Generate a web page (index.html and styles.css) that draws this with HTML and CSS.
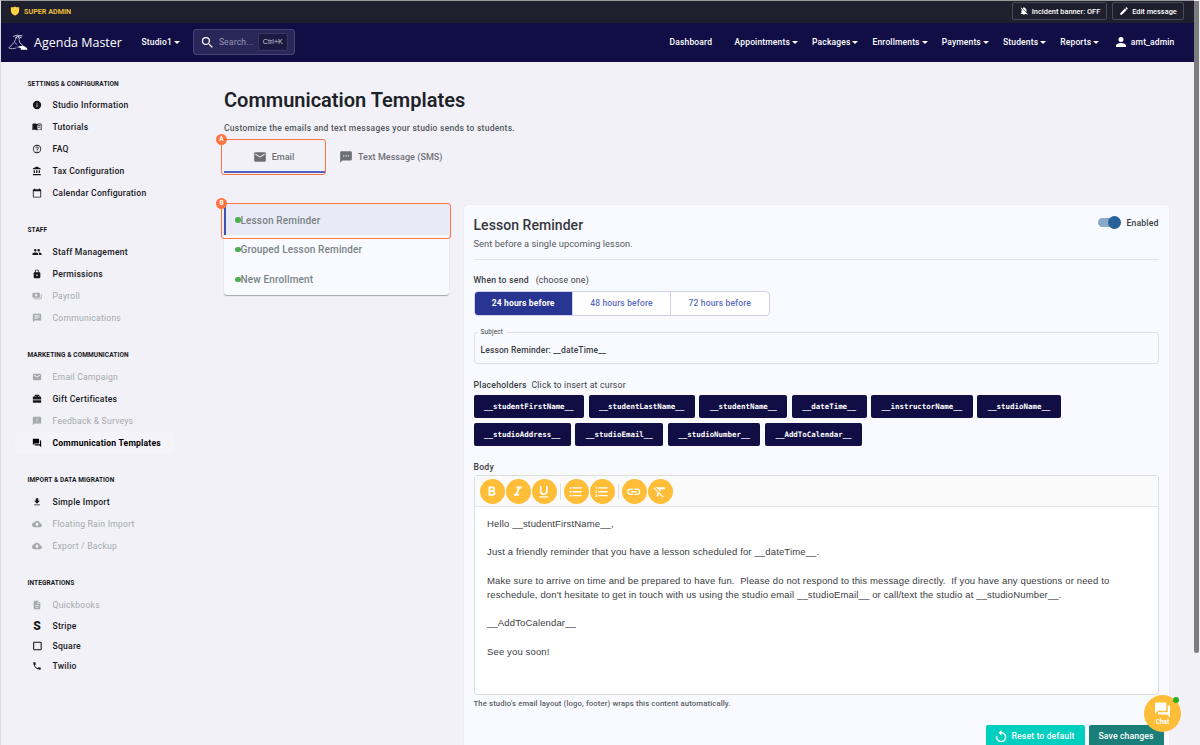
FILE: index.html
```html
<!DOCTYPE html>
<html lang="en">
<head>
    <meta charset="UTF-8">
    <meta name="viewport" content="width=device-width, initial-scale=1.0">
    <title>Communication Templates - Agenda Master</title>
    <link rel="stylesheet" href="styles.css">
</head>
<body>
    <div class="window">
        <div class="admin-bar">
            <svg class="shield" viewBox="0 0 24 24"><path d="M12 1C9 2.500 6 3 2 3v8c0 6 4 10.500 10 12 6-1.500 10-6 10-12V3c-4 0-7-.5-10-2z"/></svg>
            <span class="admin-label">SUPER ADMIN</span>
            <button class="admin-btn incident">
                <svg viewBox="0 0 24 24"><path d="M20 18.690L7.840 6.140 5.270 3.490 4 4.760l2.800 2.800v.01c-.52.99-.8 2.160-.8 3.420v5l-2 2v1h13.730l2 2L21 19.720l-1-1.030zM12 22c1.110 0 2-.89 2-2h-4c0 1.110.89 2 2 2zm6-7.320V11c0-3.080-1.640-5.640-4.500-6.320V4c0-.83-.67-1.500-1.500-1.500s-1.500.67-1.500 1.500v.68c-.65.15-1.260.4-1.800.72L18 14.680z"/></svg>
                Incident banner: OFF
            </button>
            <button class="admin-btn edit">
                <svg viewBox="0 0 24 24"><path d="M3 17.250V21h3.750L17.810 9.940l-3.750-3.750L3 17.250zM20.710 7.040c.39-.39.39-1.020 0-1.410l-2.340-2.340a1 1 0 0 0-1.410 0l-1.830 1.830 3.750 3.750 1.830-1.830z"/></svg>
                Edit message
            </button>
        </div>

        <nav class="navbar">
            <svg class="logo" viewBox="0 0 20 17">
                <path d="M5 2.500L9 1.200l5.500.6M7 4l3-1.500 3.500 1M9 2.200L7.500 5.500M11 1.500l-1 3M13 2.500l-2 3 1 3.500M7.500 5.500L6 8.500.8 14M6.500 8.500l2.500 2M12 9l3 2.500M.8 14c2.500 1.300 5 .5 7.500 0" fill="none" stroke="#d6d6ea" stroke-width=".8"/>
                <path d="M8 13c3-.5 4.500-1 6.500-1.500 2.500 1 5 2.500 5 4.200h-7c1.500-1 0-2.200-4.500-2.700z" fill="#fff"/>
            </svg>
            <span class="brand">Agenda Master</span>
            <a class="nav-link studio caret">Studio1</a>
            <div class="search">
                <svg viewBox="0 0 24 24"><path d="M15.500 14h-.79l-.28-.27A6.470 6.470 0 0 0 16 9.500 6.500 6.500 0 1 0 9.500 16c1.610 0 3.090-.59 4.230-1.570l.27.28v.79l5 4.990L20.490 19l-4.990-5zm-6 0a4.500 4.500 0 1 1 0-9 4.500 4.500 0 0 1 0 9z"/></svg>
                <span class="search-text">Search...</span>
                <kbd>Ctrl+K</kbd>
            </div>
            <div class="nav-links">
                <a class="nav-link dashboard">Dashboard</a>
                <a class="nav-link caret">Appointments</a>
                <a class="nav-link caret">Packages</a>
                <a class="nav-link caret">Enrollments</a>
                <a class="nav-link caret">Payments</a>
                <a class="nav-link caret">Students</a>
                <a class="nav-link caret">Reports</a>
                <a class="nav-link user">
                    <svg viewBox="0 0 24 24"><path d="M12 12a5 5 0 1 0 0-10 5 5 0 0 0 0 10zm0 2c-4 0-10 2-10 5.500V22h20v-2.500C22 16 16 14 12 14z"/></svg>
                    amt_admin
                </a>
            </div>
        </nav>

        <div class="page">
            <aside class="sidebar">
                <h6>SETTINGS &amp; CONFIGURATION</h6>
                <ul>
                    <li><svg viewBox="0 0 24 24"><path d="M12 2a10 10 0 1 0 0 20 10 10 0 0 0 0-20zm1 15h-2v-6h2v6zm0-8h-2V7h2v2z"/></svg>Studio Information</li>
                    <li><svg viewBox="0 0 24 24"><path d="M11 5C8 3.500 4 3.500 1 5v15c3-1.500 7-1.500 10 0 .6.600 1.400.600 2 0 3-1.500 7-1.500 10 0V5c-3-1.500-7-1.500-10 0h-2zm10 12.500c-2.500-.7-5.500-.3-8 1V7c2.500-1.300 5.500-1.700 8-1v11.500zM14.500 8.500v1.700c1.600-.6 3.300-.8 5-.6V8c-1.700-.2-3.400 0-5 .5zm0 3.500v1.700c1.600-.6 3.300-.8 5-.6v-1.600c-1.700-.2-3.400 0-5 .5z"/></svg>Tutorials</li>
                    <li><svg viewBox="0 0 24 24"><path d="M11 18h2v-2h-2v2zm1-16a10 10 0 1 0 0 20 10 10 0 0 0 0-20zm0 18a8 8 0 1 1 0-16 8 8 0 0 1 0 16zm0-14a4 4 0 0 0-4 4h2a2 2 0 1 1 4 0c0 2-3 1.750-3 5h2c0-2.250 3-2.500 3-5a4 4 0 0 0-4-4z"/></svg>FAQ</li>
                    <li><svg viewBox="0 0 24 24"><path d="M4 10v7h3v-7H4zm6 0v7h3v-7h-3zM2 22h19v-3H2v3zm14-12v7h3v-7h-3zm-4.500-9L2 6v2h19V6l-9.500-5z"/></svg>Tax Configuration</li>
                    <li><svg viewBox="0 0 24 24"><path d="M20 3h-1V1h-2v2H7V1H5v2H4a2 2 0 0 0-2 2v16c0 1.100.9 2 2 2h16a2 2 0 0 0 2-2V5a2 2 0 0 0-2-2zm0 18H4V8h16v13z"/></svg>Calendar Configuration</li>
                </ul>
                <h6>STAFF</h6>
                <ul>
                    <li><svg viewBox="0 0 24 24"><path d="M16 11a3 3 0 1 0 0-6 3 3 0 0 0 0 6zm-8 0a3 3 0 1 0 0-6 3 3 0 0 0 0 6zm0 2c-2.330 0-7 1.170-7 3.500V19h14v-2.500C15 14.170 10.330 13 8 13zm8 0c-.29 0-.62.020-.97.050 1.160.84 1.970 1.970 1.970 3.450V19h6v-2.500c0-2.330-4.670-3.500-7-3.500z"/></svg>Staff Management</li>
                    <li><svg viewBox="0 0 24 24"><path d="M18 8h-1V6A5 5 0 0 0 7 6v2H6a2 2 0 0 0-2 2v10c0 1.100.9 2 2 2h12a2 2 0 0 0 2-2V10a2 2 0 0 0-2-2zm-6 9a2 2 0 1 1 0-4 2 2 0 0 1 0 4zm3.100-9H8.900V6a3.100 3.100 0 0 1 6.200 0v2z"/></svg>Permissions</li>
                    <li class="off"><svg viewBox="0 0 24 24"><path fill-rule="evenodd" d="M19 14V6a2 2 0 0 0-2-2H3a2 2 0 0 0-2 2v8c0 1.100.9 2 2 2h14a2 2 0 0 0 2-2zm-9-1a3 3 0 1 1 0-6 3 3 0 0 1 0 6zm13-6v11a2 2 0 0 1-2 2H4v-2h17V7h2z"/></svg>Payroll</li>
                    <li class="off"><svg viewBox="0 0 24 24"><path d="M20 2H4a2 2 0 0 0-2 2v18l4-4h14a2 2 0 0 0 2-2V4a2 2 0 0 0-2-2zM6 5.500h12v2H6v-2zm0 3.500h12v2H6V9zm0 3.500h8v2H6v-2z"/></svg>Communications</li>
                </ul>
                <h6>MARKETING &amp; COMMUNICATION</h6>
                <ul>
                    <li class="off"><svg viewBox="0 0 24 24"><path d="M20 4H4a2 2 0 0 0-2 2v12c0 1.100.9 2 2 2h16a2 2 0 0 0 2-2V6a2 2 0 0 0-2-2zm0 4l-8 5-8-5V6l8 5 8-5v2z"/></svg>Email Campaign</li>
                    <li><svg viewBox="0 0 24 24"><path d="M20 6h-2.200A3 3 0 0 0 12 3.500 3 3 0 0 0 6.200 6H4a2 2 0 0 0-2 2v5h20V8a2 2 0 0 0-2-2zM9 7a1 1 0 1 1 0-2 1 1 0 0 1 0 2zm6 0a1 1 0 1 1 0-2 1 1 0 0 1 0 2zM2 15v4c0 1.100.9 2 2 2h16a2 2 0 0 0 2-2v-4H2z"/></svg>Gift Certificates</li>
                    <li class="off"><svg viewBox="0 0 24 24"><path d="M20 2H4a2 2 0 0 0-2 2v18l4-4h14a2 2 0 0 0 2-2V4a2 2 0 0 0-2-2zm-7 12h-2v-2h2v2zm0-4h-2V6h2v4z"/></svg>Feedback &amp; Surveys</li>
                    <li class="active"><svg viewBox="0 0 24 24"><path d="M21 6h-2v9H6v2c0 .55.45 1 1 1h11l4 4V7c0-.55-.45-1-1-1zm-4 6V3c0-.55-.45-1-1-1H3c-.55 0-1 .45-1 1v14l4-4h10c.55 0 1-.45 1-1z"/></svg>Communication Templates</li>
                </ul>
                <h6>IMPORT &amp; DATA MIGRATION</h6>
                <ul>
                    <li><svg viewBox="0 0 24 24"><path d="M19 9h-4V3H9v6H5l7 7 7-7zM5 18v2h14v-2H5z"/></svg>Simple Import</li>
                    <li class="off"><svg viewBox="0 0 24 24"><path d="M19.350 10.040A7.490 7.490 0 0 0 12 4C9.110 4 6.600 5.640 5.350 8.040A5.990 5.990 0 0 0 0 14c0 3.310 2.690 6 6 6h13a5 5 0 0 0 .35-9.960zM14 13v4h-4v-4H7l5-5 5 5h-3z"/></svg>Floating Rain Import</li>
                    <li class="off"><svg viewBox="0 0 24 24"><path d="M19.350 10.040A7.490 7.490 0 0 0 12 4C9.110 4 6.600 5.640 5.350 8.040A5.990 5.990 0 0 0 0 14c0 3.310 2.690 6 6 6h13a5 5 0 0 0 .35-9.960zM14 13v4h-4v-4H7l5-5 5 5h-3z"/></svg>Export / Backup</li>
                </ul>
                <h6>INTEGRATIONS</h6>
                <ul class="integrations">
                    <li class="off"><svg viewBox="0 0 24 24"><path d="M14 2H6a2 2 0 0 0-2 2v16c0 1.100.9 2 2 2h12a2 2 0 0 0 2-2V8l-6-6zm2 16H8v-2h8v2zm0-4H8v-2h8v2zm-3-5V3.500L18.500 9H13z"/></svg>Quickbooks</li>
                    <li><span class="stripe">S</span>Stripe</li>
                    <li><svg viewBox="0 0 24 24"><rect x="4" y="3" width="18" height="18" rx="2" fill="none" stroke="#111" stroke-width="2.500"/></svg>Square</li>
                    <li><svg viewBox="0 0 24 24"><path d="M20 15.500c-1.250 0-2.450-.2-3.570-.57a1 1 0 0 0-1.020.24l-2.200 2.200a15.050 15.050 0 0 1-6.590-6.590l2.200-2.210a1 1 0 0 0 .25-1A11.400 11.400 0 0 1 8.500 4c0-.55-.45-1-1-1H4c-.55 0-1 .45-1 1a17 17 0 0 0 17 17c.55 0 1-.45 1-1v-3.500c0-.55-.45-1-1-1z"/></svg>Twilio</li>
                </ul>
            </aside>

            <main class="main">
                <h1>Communication Templates</h1>
                <p class="subtitle">Customize the emails and text messages your studio sends to students.</p>
                <div class="tabs">
                    <div class="tab selected">
                        <svg viewBox="0 0 24 24"><path d="M20 4H4a2 2 0 0 0-2 2v12c0 1.100.9 2 2 2h16a2 2 0 0 0 2-2V6a2 2 0 0 0-2-2zm0 4l-8 5-8-5V6l8 5 8-5v2z"/></svg>
                        Email
                        <span class="callout"><b>A</b></span>
                    </div>
                    <div class="tab">
                        <svg viewBox="0 0 24 24"><path d="M20 2H4a2 2 0 0 0-2 2v18l4-4h14a2 2 0 0 0 2-2V4a2 2 0 0 0-2-2zM9 11H7V9h2v2zm4 0h-2V9h2v2zm4 0h-2V9h2v2z"/></svg>
                        Text Message (SMS)
                    </div>
                </div>

                <div class="columns">
                    <div class="template-list">
                        <div class="template current">Lesson Reminder<span class="callout"><b>B</b></span></div>
                        <div class="template">Grouped Lesson Reminder</div>
                        <div class="template">New Enrollment</div>
                    </div>

                    <section class="editor-card">
                        <header>
                            <div>
                                <h2>Lesson Reminder</h2>
                                <p>Sent before a single upcoming lesson.</p>
                            </div>
                            <div class="enabled"><span class="switch"></span>Enabled</div>
                        </header>

                        <div class="field-label when">When to send <span>(choose one)</span></div>
                        <div class="button-group">
                            <button class="on">24 hours before</button>
                            <button>48 hours before</button>
                            <button>72 hours before</button>
                        </div>

                        <fieldset class="subject">
                            <legend>Subject</legend>
                            Lesson Reminder: __dateTime__
                        </fieldset>

                        <div class="field-label placeholders">Placeholders <span>Click to insert at cursor</span></div>
                        <div class="chips">
                            <code>__studentFirstName__</code>
                            <code>__studentLastName__</code>
                            <code>__studentName__</code>
                            <code>__dateTime__</code>
                            <code>__instructorName__</code>
                            <code>__studioName__</code>
                            <code>__studioAddress__</code>
                            <code>__studioEmail__</code>
                            <code>__studioNumber__</code>
                            <code>__AddToCalendar__</code>
                        </div>

                        <div class="field-label body-label">Body</div>
                        <div class="editor">
                            <div class="toolbar">
                                <button><svg viewBox="0 0 24 24"><path d="M15.600 10.790c.97-.67 1.650-1.770 1.650-2.790 0-2.260-1.750-4-4-4H7v14h7.040c2.090 0 3.710-1.700 3.710-3.790 0-1.520-.86-2.820-2.150-3.420zM10 6.500h3a1.500 1.500 0 0 1 0 3h-3v-3zm3.500 9H10v-3h3.500a1.500 1.500 0 0 1 0 3z"/></svg></button>
                                <button><svg viewBox="0 0 24 24"><path d="M10 4v3h2.210l-3.420 8H6v3h8v-3h-2.210l3.420-8H18V4z"/></svg></button>
                                <button><svg viewBox="0 0 24 24"><path d="M12 17a6 6 0 0 0 6-6V3h-2.500v8a3.500 3.500 0 0 1-7 0V3H6v8a6 6 0 0 0 6 6zm-7 2v2h14v-2H5z"/></svg></button>
                                <i></i>
                                <button><svg viewBox="0 0 24 24"><path d="M4 10.500a1.500 1.500 0 1 0 0 3 1.500 1.500 0 0 0 0-3zm0-6a1.500 1.500 0 1 0 0 3 1.500 1.500 0 0 0 0-3zm0 12a1.500 1.500 0 1 0 0 3 1.500 1.500 0 0 0 0-3zM7 19h14v-2H7v2zm0-6h14v-2H7v2zm0-8v2h14V5H7z"/></svg></button>
                                <button><svg viewBox="0 0 24 24"><path d="M2 17h2v.5H3v1h1v.5H2v1h3v-4H2v1zm1-9h1V4H2v1h1v3zm-1 3h1.800L2 13.100v.9h3v-1H3.200L5 10.900V10H2v1zm5-6v2h14V5H7zm0 14h14v-2H7v2zm0-6h14v-2H7v2z"/></svg></button>
                                <i></i>
                                <button><svg viewBox="0 0 24 24"><path d="M3.900 12A3.100 3.100 0 0 1 7 8.900h4V7H7a5 5 0 0 0 0 10h4v-1.900H7A3.100 3.100 0 0 1 3.900 12zM8 13h8v-2H8v2zm9-6h-4v1.900h4a3.100 3.100 0 0 1 0 6.200h-4V17h4a5 5 0 0 0 0-10z"/></svg></button>
                                <button><svg viewBox="0 0 24 24"><path d="M3.270 5L2 6.270l6.970 6.970L6.500 19h3l1.570-3.660L16.730 21 18 19.730 3.550 5.270 3.270 5zM6 5v.18L8.820 8h2.400l-.72 1.680 2.100 2.100L14.210 8H20V5H6z"/></svg></button>
                            </div>
                            <div class="message">Hello __studentFirstName__,

Just a friendly reminder that you have a lesson scheduled for __dateTime__.

Make sure to arrive on time and be prepared to have fun.  Please do not respond to this message directly.  If you have any questions or need to
reschedule, don't hesitate to get in touch with us using the studio email __studioEmail__ or call/text the studio at __studioNumber__.

__AddToCalendar__

See you soon!</div>
                        </div>
                        <p class="note">The studio's email layout (logo, footer) wraps this content automatically.</p>
                        <div class="actions">
                            <button class="reset"><svg viewBox="0 0 24 24"><path d="M12 3.500V0L6.500 5 12 10V6a7 7 0 1 1-7.500 5H2a9.500 9.500 0 1 0 10-7.500z"/></svg>Reset to default</button>
                            <button class="save">Save changes</button>
                        </div>
                    </section>
                </div>
            </main>
        </div>
    </div>

    <div class="scrollbar"></div>
    <div class="chat">
        <svg viewBox="0 0 24 24"><path d="M21 6h-2v9H6v2c0 .55.45 1 1 1h11l4 4V7c0-.55-.45-1-1-1zm-4 6V3c0-.55-.45-1-1-1H3c-.55 0-1 .45-1 1v14l4-4h10c.55 0 1-.45 1-1z"/></svg>
        Chat
    </div>
</body>
</html>
```
FILE: styles.css
```css
* {
    box-sizing: border-box;
}
body {
    margin: 0;
    width: 1200px;
    height: 745px;
    overflow: hidden;
    background-color: #f2f1f7;
    font-family: Roboto, sans-serif;
    font-weight: 500;
    color: #3b3d42;
}
h1, h2, h6, p, ul {
    margin: 0;
    padding: 0;
}
button {
    font: inherit;
    border: 0;
    padding: 0;
}
svg {
    fill: currentColor;
    flex: none;
}
.window {
    width: 1194px;
    height: 745px;
    border-left: 1px solid #dcdce2;
    border-top: 1px solid #9a9a9e;
    overflow: hidden;
}

/* Top bars */
.admin-bar {
    display: flex;
    align-items: center;
    height: 22px;
    padding: 0 10px 2px 9px;
    background-color: #1f1f2e;
    color: #fff;
}
.shield {
    width: 10px;
    height: 10px;
    color: #ffd044;
}
.admin-label {
    flex: 1;
    margin-left: 4px;
    font-size: 7.200px;
    font-weight: 700;
    color: #e9bd3d;
}
.admin-btn {
    display: flex;
    align-items: center;
    justify-content: center;
    height: 18px;
    border: 1px solid #4b4b58;
    border-radius: 2px;
    background: none;
    color: #fff;
    font-size: 7.400px;
}
.admin-btn svg {
    width: 10px;
    height: 10px;
    margin-right: 3px;
}
.incident {
    width: 95px;
    margin-right: 5px;
}
.edit {
    width: 72px;
}
.navbar {
    display: flex;
    align-items: center;
    height: 39px;
    padding: 0 19.500px 1px 7px;
    background-color: #110e45;
    color: #fff;
}
.logo {
    width: 20px;
    height: 17px;
}
.brand {
    width: 107px;
    margin-left: 6px;
    font-family: "Open Sans", sans-serif;
    font-weight: 400;
    font-size: 12.500px;
    white-space: nowrap;
}
.nav-link {
    display: flex;
    align-items: center;
    font-size: 8.500px;
    letter-spacing: .15px;
    white-space: nowrap;
}
.caret::after {
    content: "";
    margin-left: 2px;
    border: 3.500px solid transparent;
    border-top-color: #fff;
    border-bottom: 0;
}
.studio {
    margin-left: .5px;
}
.search {
    display: flex;
    align-items: center;
    width: 102px;
    height: 26px;
    margin-left: 13px;
    padding: 0 6px;
    border: 1px solid #474478;
    border-radius: 3px;
    background-color: #292659;
}
.search svg {
    width: 15px;
    height: 15px;
}
.search-text {
    flex: 1;
    margin-left: 4px;
    font-size: 8.500px;
    font-weight: 400;
    letter-spacing: .2px;
    color: #9a98b8;
}
kbd {
    padding: 3px 4px;
    border: 1px solid #393760;
    border-radius: 2px;
    background-color: #1c1a40;
    font-family: "Liberation Sans", sans-serif;
    font-weight: 400;
    font-size: 7.200px;
    line-height: 10px;
    color: #c8c8d6;
}
.nav-links {
    display: flex;
    gap: 14.100px;
    margin-left: auto;
}
.dashboard {
    margin-right: 8.400px;
}
.user {
    margin-left: 1.500px;
}
.user svg {
    width: 12px;
    height: 12px;
    margin-right: 4px;
}

/* Sidebar */
.page {
    display: flex;
}
.sidebar {
    width: 223px;
    padding: 14.500px 0 0 14px;
}
.sidebar h6 {
    height: 14px;
    margin-left: 12.500px;
    font-size: 6.500px;
    font-weight: 700;
    line-height: 14px;
    letter-spacing: .1px;
    color: #17181c;
}
.sidebar ul {
    margin: 4px 0 19.400px;
    list-style: none;
}
.sidebar li {
    display: flex;
    align-items: center;
    width: 160px;
    height: 21.900px;
    padding-left: 17px;
    font-size: 8.600px;
    letter-spacing: .23px;
    color: #17181c;
}
.sidebar li svg, .stripe {
    width: 10px;
    height: 10px;
    margin-right: 10.500px;
}
.sidebar .off {
    color: #a5a9ac;
    font-weight: 400;
}
.sidebar .active {
    border-radius: 4px;
    background-color: #f4f3f9;
    font-weight: 700;
    letter-spacing: .2px;
    color: #000;
}
.integrations li + li {
    height: 20px;
}
.stripe {
    font-size: 12px;
    font-weight: 900;
    line-height: 10px;
    text-align: center;
    letter-spacing: 0;
}

/* Main */
.main {
    flex: 1;
    padding-top: 24.500px;
}
h1 {
    font-size: 20px;
    font-weight: 600;
    line-height: 26px;
    color: #1d2228;
}
.subtitle {
    margin-top: 9.500px;
    font-size: 8.500px;
    line-height: 12px;
    letter-spacing: .26px;
    color: #54585e;
}
.tabs {
    display: flex;
    height: 33px;
    margin-top: 6px;
}
.tab {
    position: relative;
    display: flex;
    align-items: center;
    padding: 1px 14px 0;
    font-size: 9px;
    letter-spacing: .05px;
    color: #6e6f75;
}
.tab svg {
    width: 14px;
    height: 14px;
    margin-right: 5px;
}
.selected {
    width: 101px;
    justify-content: center;
    padding: 2px 15px 0 13px;
    border-bottom: 2px solid #5560c0;
}
.callout {
    position: absolute;
    inset: -1px -1px -4px -3px;
    border: 1.500px solid #ff7442;
    border-radius: 3px;
}
.callout b {
    position: absolute;
    left: -6px;
    top: -6px;
    width: 11px;
    height: 11px;
    border-radius: 50%;
    background-color: #ff7442;
    font-size: 6.500px;
    line-height: 11px;
    text-align: center;
    letter-spacing: 0;
    color: #fff;
}
.columns {
    display: flex;
    align-items: flex-start;
    margin-top: 32px;
}
.template-list {
    width: 225px;
    margin: -1px 14.500px 0 0;
    border-radius: 3px;
    background-color: #f9faff;
    box-shadow: 0 1px 1px #a5a6ad;
}
.template {
    position: relative;
    display: flex;
    align-items: center;
    height: 30px;
    padding: 0 0 1px 11px;
    font-size: 10px;
    letter-spacing: .15px;
    color: #7b8286;
}
.template::before {
    content: "";
    width: 5.500px;
    height: 5.500px;
    border-radius: 50%;
    background-color: #4caf50;
}
.current {
    height: 31px;
    border-left: 2px solid #3f51b5;
    background-color: #e8eaf6;
    padding: 1px 0 0 9px;
}
.current .callout {
    inset: -1px -2px -4px -5px;
}
.editor-card {
    width: 705px;
    height: 560px;
    padding: 10px 10px 0;
    border-radius: 3px;
    background-color: #f9faff;
    box-shadow: 0 0 1px #c9c9d2;
}
.editor-card header {
    display: flex;
    justify-content: space-between;
    height: 45px;
    border-bottom: 1px solid #e2e3e8;
}
h2 {
    font-size: 14px;
    font-weight: 500;
    line-height: 20px;
    letter-spacing: .05px;
    color: #36383d;
}
header p {
    font-size: 9.300px;
    font-weight: 400;
    line-height: 17px;
    letter-spacing: .05px;
    color: #55575c;
}
.enabled {
    display: flex;
    align-items: center;
    height: 15px;
    font-size: 8.700px;
    letter-spacing: .15px;
}
.switch {
    position: relative;
    width: 22px;
    height: 9px;
    margin-right: 6px;
    border-radius: 5px;
    background-color: #88a9c8;
}
.switch::after {
    content: "";
    position: absolute;
    right: -1px;
    top: -2px;
    width: 13px;
    height: 13px;
    border-radius: 50%;
    background-color: #28609a;
}
.field-label {
    font-size: 8.700px;
    line-height: 12px;
    letter-spacing: .2px;
}
.field-label span {
    font-weight: 400;
}
.when {
    margin-top: 13.500px;
}
.when span {
    margin-left: 4.500px;
}
.button-group {
    display: flex;
    width: 296px;
    height: 25px;
    margin-top: 5px;
    border: 1px solid #cfd2ee;
    border-radius: 4px;
    background-color: #fff;
    overflow: hidden;
}
.button-group button {
    flex: 1;
    padding-bottom: 1px;
    border-right: 1px solid #cfd2ee;
    background: none;
    font-size: 8.500px;
    letter-spacing: .15px;
    color: #5c6bc0;
}
.button-group button:last-child {
    border-right: 0;
}
.button-group .on {
    background-color: #283593;
    color: #fff;
    font-weight: 700;
}
.subject {
    height: 36px;
    margin: 12.500px 0 0;
    padding: 8px 6px 0;
    border: 1px solid #e0e1e6;
    border-radius: 3px;
    font-size: 8.500px;
    letter-spacing: .13px;
    line-height: 12px;
}
.subject legend {
    margin-left: -3px;
    padding: 0 3px;
    font-size: 6.500px;
    line-height: 8px;
    font-weight: 400;
}
.placeholders {
    margin-top: 15px;
}
.placeholders span {
    margin-left: 2.500px;
}
.chips {
    display: flex;
    flex-wrap: wrap;
    gap: 5px 4.500px;
    margin-top: 4px;
}
code {
    height: 23px;
    padding: 0 10.500px;
    border-radius: 2px;
    background-color: #110e45;
    font-family: "DejaVu Sans Mono", monospace;
    font-size: 7.450px;
    font-weight: 700;
    line-height: 24px;
    color: #fff;
}
.body-label {
    margin-top: 15px;
}
.editor {
    height: 220px;
    margin-top: 2px;
    border: 1px solid #dcdde0;
    border-radius: 3px;
    background-color: #fff;
}
.toolbar {
    display: flex;
    align-items: center;
    gap: 1px;
    height: 31px;
    padding-left: 5px;
    border-bottom: 1px solid #e5e5e8;
    background-color: #fafafa;
}
.toolbar button {
    display: flex;
    align-items: center;
    justify-content: center;
    width: 25px;
    height: 25px;
    border-radius: 50%;
    background-color: #ffbd38;
    color: #fff;
}
.toolbar svg {
    width: 15.500px;
    height: 15.500px;
    margin-top: 1px;
}
.toolbar i {
    width: 1px;
    height: 15px;
    margin: 0 2px;
    background-color: #dedede;
}
.message {
    padding: 10px 12.500px;
    font-family: "Liberation Sans", sans-serif;
    font-weight: 400;
    font-size: 9.500px;
    line-height: 14.200px;
    letter-spacing: .14px;
    white-space: pre;
}
.note {
    margin-top: 3px;
    font-size: 7.700px;
    line-height: 12px;
    letter-spacing: .14px;
    color: #5b5d62;
}
.actions {
    display: flex;
    justify-content: flex-end;
    gap: 4px;
    margin: 15px -5px 0 0;
}
.actions button {
    display: flex;
    align-items: center;
    justify-content: center;
    height: 22px;
    border-radius: 2px;
    color: #fff;
    font-size: 8.700px;
    letter-spacing: .1px;
}
.actions svg {
    width: 13px;
    height: 13px;
    margin-right: 3px;
}
.reset {
    width: 99px;
    background-color: #00cfc0;
}
.save {
    width: 75px;
    background-color: #1b7f79;
}

/* Overlays */
.scrollbar {
    position: absolute;
    left: 1194px;
    top: 1px;
    width: 5px;
    height: 652px;
    border-radius: 0 0 3px 3px;
    background-color: #7d7d7f;
}
.chat {
    position: absolute;
    left: 1144px;
    top: 695px;
    display: flex;
    flex-direction: column;
    align-items: center;
    width: 37px;
    height: 37px;
    padding-top: 6px;
    border-radius: 50%;
    background-color: #ffbd38;
    color: #fff;
    font-size: 6.500px;
    line-height: 6px;
    font-weight: 700;
}
.chat svg {
    width: 19px;
    height: 18px;
}
.chat::after {
    content: "";
    position: absolute;
    right: 2px;
    top: 2px;
    width: 6px;
    height: 6px;
    border-radius: 50%;
    background-color: #2fae1f;
}
```
